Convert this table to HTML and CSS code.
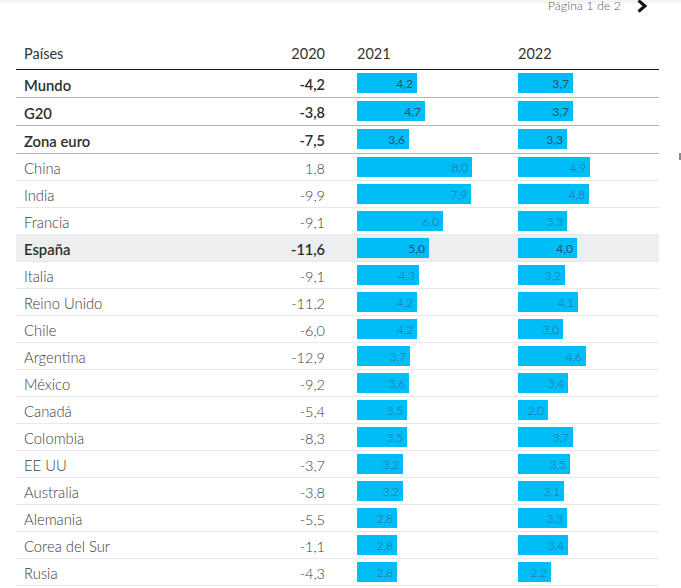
FILE: index.html
```html
<!DOCTYPE html>
<html lang="es">
<head>
<meta charset="utf-8">
<title>Previsiones de crecimiento</title>
<link rel="stylesheet" href="styles.css">
</head>
<body>
<div class="page">
  <main class="main">
    <div class="pager">
      <span class="pager-text">Página 1 de 2</span>
      <svg class="chev" width="12" height="14" viewBox="0 0 12 14"><polyline points="2.5,1.5 9,7 2.5,12.5" fill="none" stroke="#111" stroke-width="3" stroke-linejoin="miter"/></svg>
    </div>
    <div class="table">
      <div class="row head">
        <div class="c-name">Países</div>
        <div class="c-num">2020</div>
        <div class="c-bar">2021</div>
        <div class="c-bar2">2022</div>
      </div>

      <div class="row strong top"><div class="c-name">Mundo</div><div class="c-num">-4,2</div><div class="c-bar"><span class="bar" style="width:60px">4,2</span></div><div class="c-bar2"><span class="bar" style="width:55px">3,7</span></div></div>
      <div class="row strong top"><div class="c-name">G20</div><div class="c-num">-3,8</div><div class="c-bar"><span class="bar" style="width:68px">4,7</span></div><div class="c-bar2"><span class="bar" style="width:55px">3,7</span></div></div>
      <div class="row strong top"><div class="c-name">Zona euro</div><div class="c-num">-7,5</div><div class="c-bar"><span class="bar" style="width:52px">3,6</span></div><div class="c-bar2"><span class="bar" style="width:49px">3,3</span></div></div>

      <div class="row"><div class="c-name">China</div><div class="c-num">1,8</div><div class="c-bar"><span class="bar" style="width:115px">8,0</span></div><div class="c-bar2"><span class="bar" style="width:72px">4,9</span></div></div>
      <div class="row"><div class="c-name">India</div><div class="c-num">-9,9</div><div class="c-bar"><span class="bar" style="width:114px">7,9</span></div><div class="c-bar2"><span class="bar" style="width:71px">4,8</span></div></div>
      <div class="row"><div class="c-name">Francia</div><div class="c-num">-9,1</div><div class="c-bar"><span class="bar" style="width:86px">6,0</span></div><div class="c-bar2"><span class="bar" style="width:49px">3,3</span></div></div>
      <div class="row strong hl"><div class="c-name">España</div><div class="c-num">-11,6</div><div class="c-bar"><span class="bar" style="width:72px">5,0</span></div><div class="c-bar2"><span class="bar" style="width:59px">4,0</span></div></div>
      <div class="row"><div class="c-name">Italia</div><div class="c-num">-9,1</div><div class="c-bar"><span class="bar" style="width:62px">4,3</span></div><div class="c-bar2"><span class="bar" style="width:47px">3,2</span></div></div>
      <div class="row"><div class="c-name">Reino Unido</div><div class="c-num">-11,2</div><div class="c-bar"><span class="bar" style="width:60px">4,2</span></div><div class="c-bar2"><span class="bar" style="width:60px">4,1</span></div></div>
      <div class="row"><div class="c-name">Chile</div><div class="c-num">-6,0</div><div class="c-bar"><span class="bar" style="width:60px">4,2</span></div><div class="c-bar2"><span class="bar" style="width:45px">3,0</span></div></div>
      <div class="row"><div class="c-name">Argentina</div><div class="c-num">-12,9</div><div class="c-bar"><span class="bar" style="width:53px">3,7</span></div><div class="c-bar2"><span class="bar" style="width:68px">4,6</span></div></div>
      <div class="row"><div class="c-name">México</div><div class="c-num">-9,2</div><div class="c-bar"><span class="bar" style="width:52px">3,6</span></div><div class="c-bar2"><span class="bar" style="width:50px">3,4</span></div></div>
      <div class="row"><div class="c-name">Canadá</div><div class="c-num">-5,4</div><div class="c-bar"><span class="bar" style="width:50px">3,5</span></div><div class="c-bar2"><span class="bar" style="width:30px">2,0</span></div></div>
      <div class="row"><div class="c-name">Colombia</div><div class="c-num">-8,3</div><div class="c-bar"><span class="bar" style="width:50px">3,5</span></div><div class="c-bar2"><span class="bar" style="width:55px">3,7</span></div></div>
      <div class="row"><div class="c-name">EE UU</div><div class="c-num">-3,7</div><div class="c-bar"><span class="bar" style="width:46px">3,2</span></div><div class="c-bar2"><span class="bar" style="width:52px">3,5</span></div></div>
      <div class="row"><div class="c-name">Australia</div><div class="c-num">-3,8</div><div class="c-bar"><span class="bar" style="width:46px">3,2</span></div><div class="c-bar2"><span class="bar" style="width:46px">3,1</span></div></div>
      <div class="row"><div class="c-name">Alemania</div><div class="c-num">-5,5</div><div class="c-bar"><span class="bar" style="width:40px">2,8</span></div><div class="c-bar2"><span class="bar" style="width:49px">3,3</span></div></div>
      <div class="row"><div class="c-name">Corea del Sur</div><div class="c-num">-1,1</div><div class="c-bar"><span class="bar" style="width:40px">2,8</span></div><div class="c-bar2"><span class="bar" style="width:50px">3,4</span></div></div>
      <div class="row"><div class="c-name">Rusia</div><div class="c-num">-4,3</div><div class="c-bar"><span class="bar" style="width:40px">2,8</span></div><div class="c-bar2"><span class="bar" style="width:33px">2,2</span></div></div>
    </div>
  </main>
  <aside class="side"><span class="side-mark"></span></aside>
</div>
</body>
</html>
```

FILE: styles.css
```css
html, body {
  margin: 0;
  padding: 0;
}
body {
  width: 681px;
  height: 588px;
  overflow: hidden;
  background: linear-gradient(#f3f3f3, #f3f3f3) top left / 100% 3px no-repeat, #fff;
  font-family: Lato, "Liberation Sans", sans-serif;
  color: #333;
}
.page {
  display: flex;
}
.main {
  width: 643px;
  margin-left: 16px;
}
.pager {
  height: 38px;
  display: flex;
  justify-content: flex-end;
  align-items: flex-start;
  padding-right: 11px;
}
.pager-text {
  font-size: 12.5px;
  line-height: 16px;
  font-weight: 300;
  color: #5a5a5a;
  margin-top: -2px;
}
.chev {
  margin-left: 15px;
  margin-top: -1px;
}
.row {
  display: grid;
  grid-template-columns: 180px 129px 193px 141px;
  align-items: center;
  height: 26px;
  border-bottom: 1px solid #e8e8e8;
  font-size: 14.8px;
  font-weight: 300;
  color: #3c3c3c;
}
.row .c-name,
.row .c-num {
  padding-top: 2px;
}
.row .c-num {
  font-size: 14.5px;
}
.row.head {
  height: 31px;
  border-bottom: 1px solid #1a1a1a;
  font-size: 14.5px;
  font-weight: 400;
  color: #333;
}
.row.head .c-name,
.row.head .c-num {
  padding-top: 0;
}
.row.top {
  height: 27px;
  border-bottom: 1px solid #b4b4b4;
}
.row.strong {
  font-weight: 600;
  color: #2e2e2e;
}
.row.hl {
  background: #eceeef;
}
.c-name {
  padding-left: 8px;
}
.c-num {
  text-align: right;
}
.c-bar {
  padding-left: 32px;
  display: flex;
}
.c-bar2 {
  display: flex;
}
.bar {
  display: block;
  height: 20px;
  line-height: 21px;
  background: #00bdf8;
  text-align: right;
  padding-right: 4px;
  box-sizing: border-box;
  font-size: 12px;
  font-weight: 300;
  color: #2f6a8a;
}
.row.strong .bar {
  font-weight: 400;
  color: #24536e;
}
.row.top .bar {
  margin-top: -1px;
}
.side {
  flex: 1;
  display: flex;
  justify-content: flex-end;
  padding-top: 153px;
}
.side-mark {
  width: 2px;
  height: 7px;
  background: #888;
}
```
